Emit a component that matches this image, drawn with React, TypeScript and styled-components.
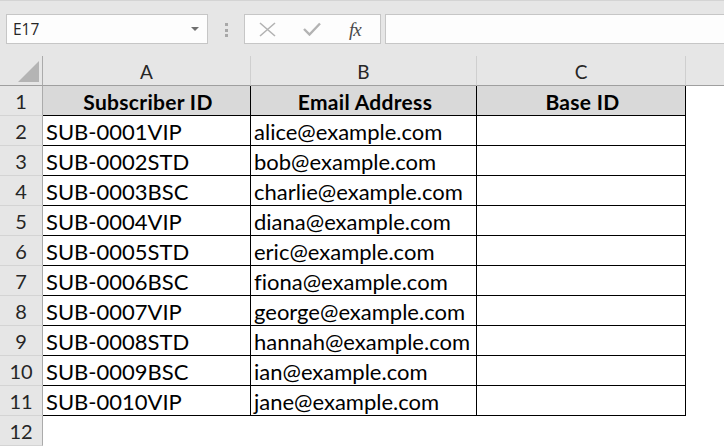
import React from 'react'
import styled, { createGlobalStyle } from 'styled-components'

const GlobalStyle = createGlobalStyle`
  html, body {
    margin: 0;
    padding: 0;
    background: #ffffff;
    overflow: hidden;
  }
  * { box-sizing: border-box; }
`

const Page = styled.div`
  width: 724px;
  height: 446px;
  background: #ffffff;
  font-family: Lato, "Liberation Sans", sans-serif;
  font-variant-ligatures: none;
`

const Toolbar = styled.div`
  height: 56px;
  background: #e6e6e6;
  border-top: 1px solid #d4d4d4;
  display: flex;
  align-items: flex-start;
  padding-top: 13px;
  padding-left: 6px;
`

const NameBox = styled.div`
  width: 202px;
  height: 30px;
  background: #fdfdfd;
  border: 1px solid #c6c6c6;
  display: flex;
  align-items: center;
  justify-content: space-between;
  padding: 0 8px 0 6px;
  font-family: "Open Sans", "Noto Sans", sans-serif;
  font-size: 15.5px;
  color: #262626;
`

const DropArrow = styled.span`
  width: 0;
  height: 0;
  border-left: 4px solid transparent;
  border-right: 4px solid transparent;
  border-top: 4px solid #707070;
`

const Grip = styled.div`
  width: 3px;
  height: 14px;
  margin: 9px 16px 0 17px;
  display: flex;
  flex-direction: column;
  justify-content: space-between;

  span {
    display: block;
    width: 3px;
    height: 3px;
    background: #a8a8a8;
  }
`

const FormulaButtons = styled.div`
  width: 137px;
  height: 30px;
  background: #fdfdfd;
  border: 1px solid #c6c6c6;
  display: flex;
  align-items: center;
  padding-left: 14px;
  gap: 27px;
`

const Fx = styled.span`
  font-family: "Liberation Serif", serif;
  font-style: italic;
  font-size: 19px;
  color: #4a4a4a;
  margin-left: 1px;
  letter-spacing: -1px;
  line-height: 1;
`

const FormulaInput = styled.div`
  flex: 1;
  height: 30px;
  margin-left: 4px;
  background: #fdfdfd;
  border: 1px solid #c6c6c6;
  border-right: none;
`

const Grid = styled.div`
  display: grid;
  grid-template-columns: 43px 208px 226px 209px 1fr;
  grid-auto-rows: 30px;
`

const Corner = styled.div`
  background: #e6e6e6;
  border-right: 1px solid #ababab;
  border-bottom: 1px solid #9f9f9f;
  position: relative;

  &::after {
    content: '';
    position: absolute;
    right: 3px;
    bottom: 3px;
    width: 0;
    height: 0;
    border-left: 21px solid transparent;
    border-bottom: 21px solid #b4b4b4;
  }
`

const ColHeader = styled.div<{ $open?: boolean }>`
  background: #e6e6e6;
  border-right: ${p => (p.$open ? 'none' : '1px solid #cfcfcf')};
  border-bottom: 1px solid #9f9f9f;
  display: flex;
  align-items: center;
  justify-content: center;
  padding-top: 2px;
  font-size: 19px;
  color: #262626;
`

const RowHeader = styled.div`
  background: #e6e6e6;
  border-right: 1px solid #ababab;
  border-bottom: 1px solid #d4d4d4;
  display: flex;
  align-items: center;
  justify-content: center;
  padding-top: 1px;
  font-size: 20px;
  color: #262626;
`

const Cell = styled.div<{ $head?: boolean; $boxed?: boolean }>`
  background: ${p => (p.$head ? '#d9d9d9' : '#ffffff')};
  border-right: ${p => (p.$boxed ? '1px solid #000' : 'none')};
  border-bottom: ${p => (p.$boxed ? '1px solid #000' : 'none')};
  display: flex;
  align-items: center;
  justify-content: ${p => (p.$head ? 'center' : 'flex-start')};
  padding: 1px 0 0 3px;
  font-size: ${p => (p.$head ? '21px' : '22px')};
  letter-spacing: ${p => (p.$head ? '0.3px' : '0')};
  font-weight: ${p => (p.$head ? 700 : 400)};
  color: #000;
  white-space: nowrap;
  overflow: hidden;
`

const rows = [
  ['SUB-0001VIP', 'alice@example.com'],
  ['SUB-0002STD', 'bob@example.com'],
  ['SUB-0003BSC', 'charlie@example.com'],
  ['SUB-0004VIP', 'diana@example.com'],
  ['SUB-0005STD', 'eric@example.com'],
  ['SUB-0006BSC', 'fiona@example.com'],
  ['SUB-0007VIP', 'george@example.com'],
  ['SUB-0008STD', 'hannah@example.com'],
  ['SUB-0009BSC', 'ian@example.com'],
  ['SUB-0010VIP', 'jane@example.com'],
]

export default function App() {
  return (
    <Page>
      <GlobalStyle />
      <Toolbar>
        <NameBox>
          E17
          <DropArrow />
        </NameBox>
        <Grip>
          <span />
          <span />
          <span />
        </Grip>
        <FormulaButtons>
          <svg width="17" height="15" viewBox="0 0 17 15">
            <path d="M1 1 L16 14 M16 1 L1 14" stroke="#b3b3b3" strokeWidth="1.6" fill="none" />
          </svg>
          <svg width="18" height="14" viewBox="0 0 18 14">
            <path d="M1 7 L6.5 12.5 L17 1.5" stroke="#b3b3b3" strokeWidth="2.4" fill="none" />
          </svg>
          <Fx>fx</Fx>
        </FormulaButtons>
        <FormulaInput />
      </Toolbar>

      <Grid>
        <Corner />
        <ColHeader>A</ColHeader>
        <ColHeader>B</ColHeader>
        <ColHeader>C</ColHeader>
        <ColHeader $open />

        <RowHeader>1</RowHeader>
        <Cell $head $boxed>Subscriber ID</Cell>
        <Cell $head $boxed>Email Address</Cell>
        <Cell $head $boxed>Base ID</Cell>
        <Cell />

        {rows.map(([id, email], i) => (
          <React.Fragment key={id}>
            <RowHeader>{i + 2}</RowHeader>
            <Cell $boxed>{id}</Cell>
            <Cell $boxed>{email}</Cell>
            <Cell $boxed />
            <Cell />
          </React.Fragment>
        ))}

        <RowHeader>12</RowHeader>
        <Cell />
        <Cell />
        <Cell />
        <Cell />
      </Grid>
    </Page>
  )
}
